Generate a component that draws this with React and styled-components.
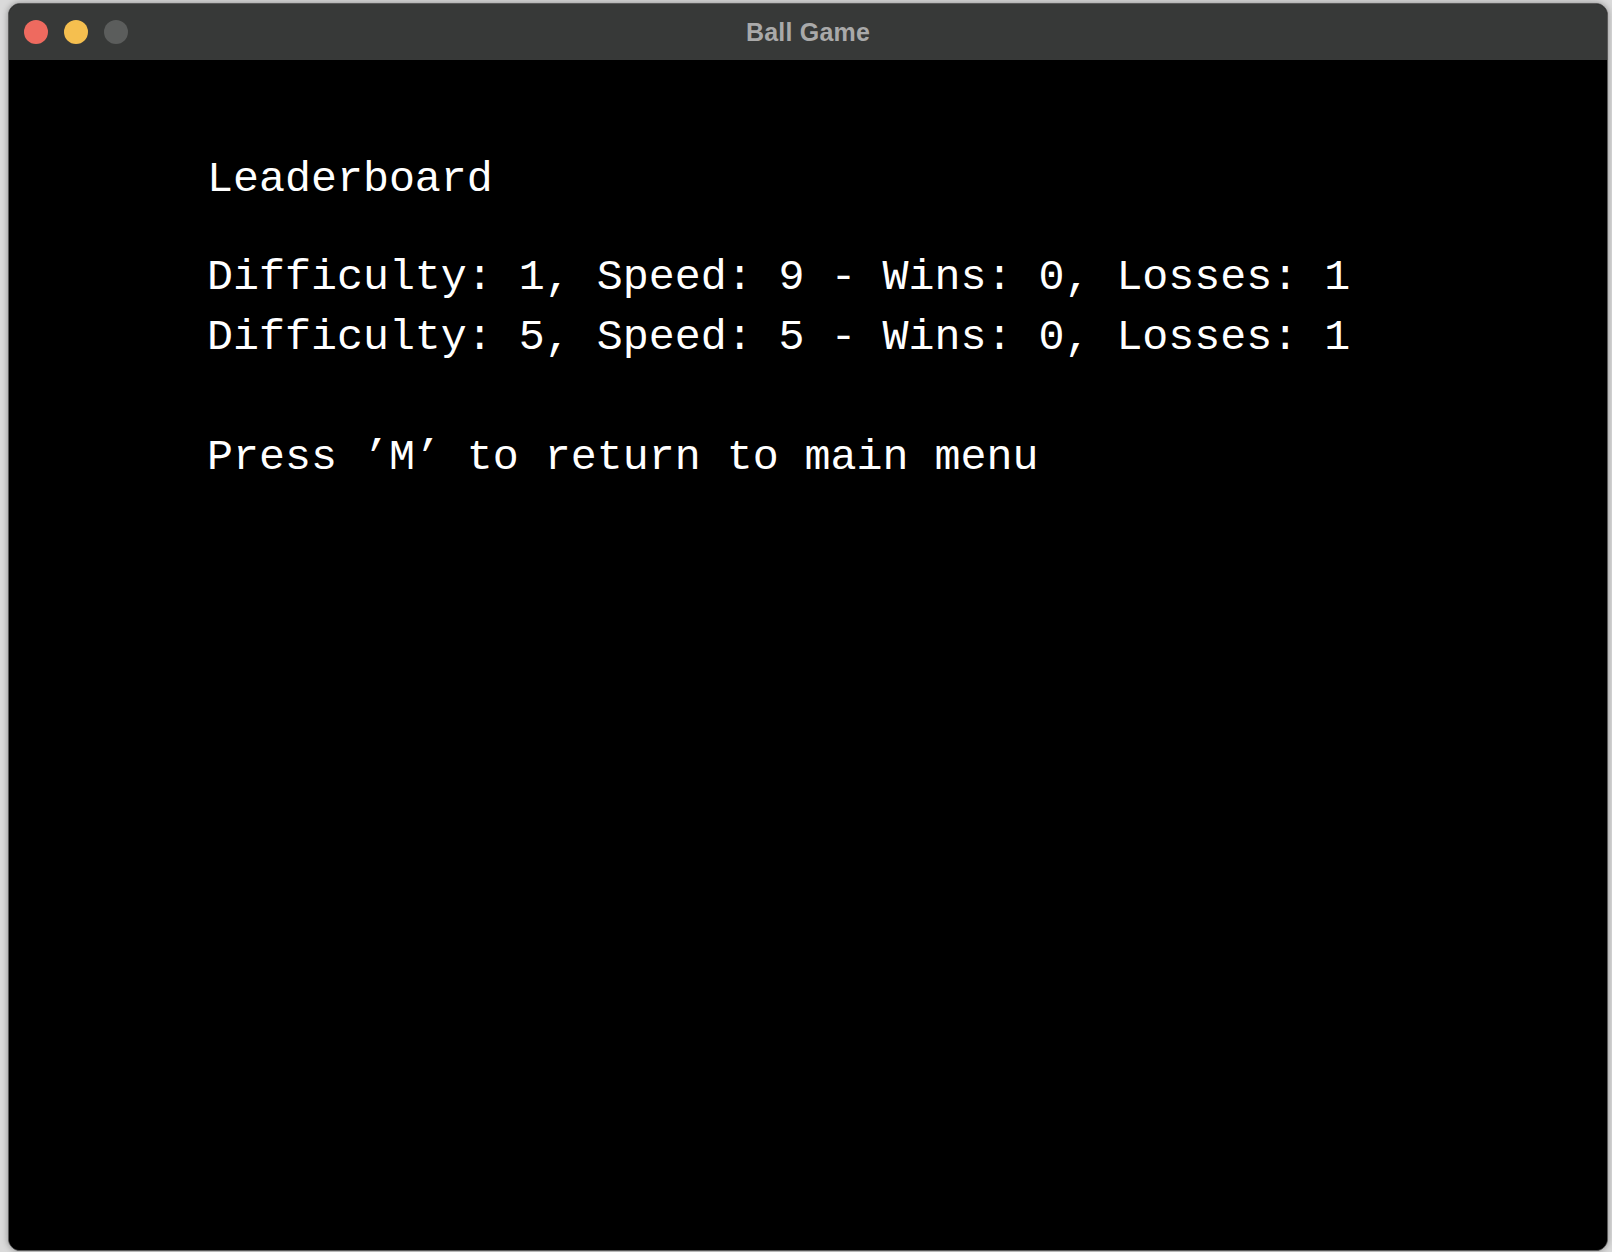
import styled, {createGlobalStyle} from 'styled-components';

const Global=createGlobalStyle`
  html,body{margin:0;padding:0;background:#dadada;}
  body{width:1612px;height:1252px;overflow:hidden;}
  #root{height:100%;}
`;

const Desk=styled.div`
  height:100%;box-sizing:border-box;
  padding:3px 4px 0 8px;
  display:flex;
`;

const Window=styled.div`
  flex:1;display:flex;flex-direction:column;
  border:1px solid #5a5a5a;border-radius:12px;
  overflow:hidden;background:#000;
  box-shadow:0 0 6px rgba(0,0,0,.35);
  margin-bottom:1px;
`;

const TitleBar=styled.div`
  height:56px;flex:none;background:#373938;
  display:grid;grid-template-columns:1fr auto 1fr;align-items:center;
  padding:0 15px;box-sizing:border-box;
`;

const Lights=styled.div`display:flex;gap:16px;align-items:center;`;

const Light=styled.span`
  width:24px;height:24px;border-radius:50%;
  background:${({$c})=>$c};
`;

const Title=styled.div`
  font-family:"Liberation Sans",Arial,sans-serif;font-weight:700;
  font-size:25px;color:#a9a9a9;letter-spacing:.2px;
`;

const Screen=styled.div`
  flex:1;background:#000;
  padding:90px 0 0 198px;
  font-family:"Liberation Mono","Courier New",monospace;
  font-size:43.3px;line-height:60px;color:#fff;
  white-space:pre;
`;

const Heading=styled.div`margin-bottom:38px;`;
const Row=styled.div``;
const Hint=styled.div`margin-top:60px;`;

const scores=[
  {d:1,s:9,w:0,l:1},
  {d:5,s:5,w:0,l:1},
];

export default function App(){
  return(
    <>
      <Global/>
      <Desk>
        <Window>
          <TitleBar>
            <Lights>
              <Light $c="#ee6a5f"/>
              <Light $c="#f5bf4f"/>
              <Light $c="#5b5d5c"/>
            </Lights>
            <Title>Ball Game</Title>
            <div/>
          </TitleBar>
          <Screen>
            <Heading>Leaderboard</Heading>
            {scores.map((r,i)=>(
              <Row key={i}>{`Difficulty: ${r.d}, Speed: ${r.s} - Wins: ${r.w}, Losses: ${r.l}`}</Row>
            ))}
            <Hint>Press ’M’ to return to main menu</Hint>
          </Screen>
        </Window>
      </Desk>
    </>
  );
}
